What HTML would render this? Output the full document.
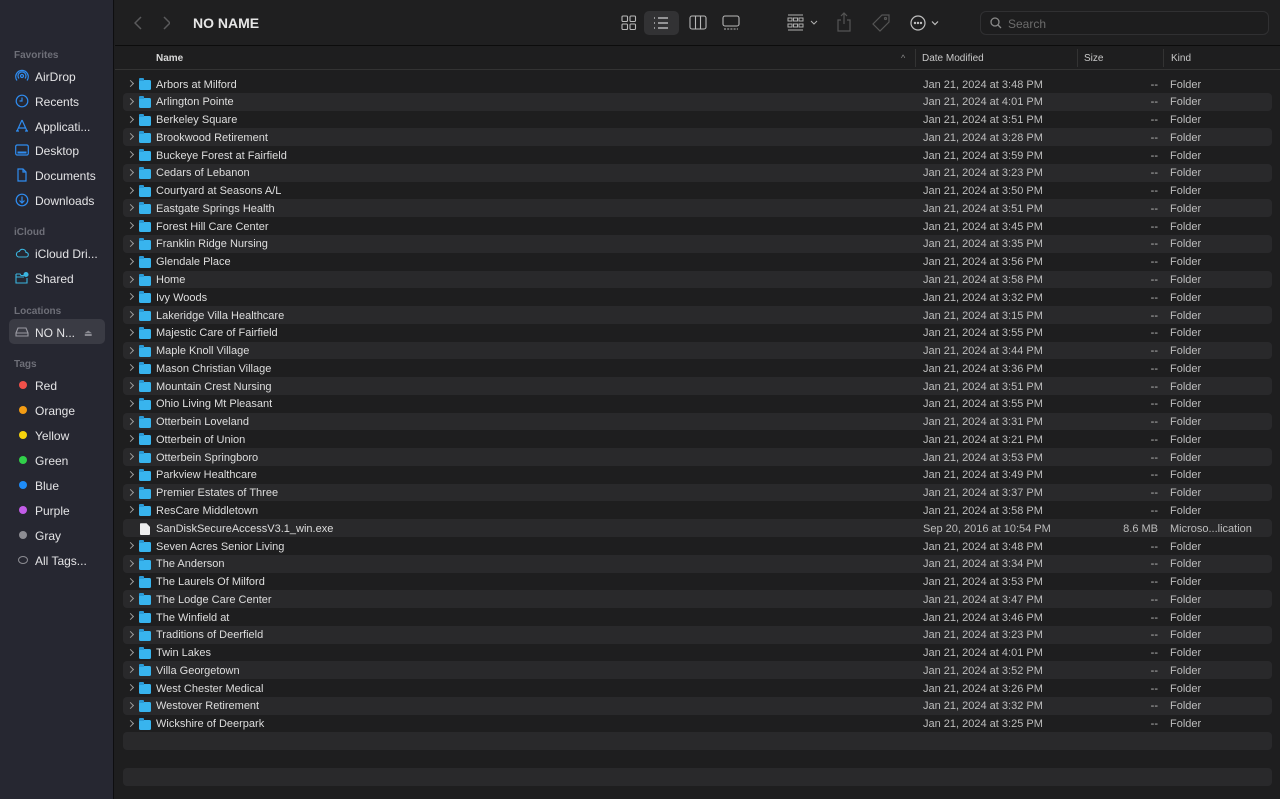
<!DOCTYPE html>
<html><head><meta charset="utf-8"><style>
*{margin:0;padding:0;box-sizing:border-box}
body{width:1280px;height:799px;overflow:hidden;background:#1e1e1f;font-family:"Liberation Sans",sans-serif;color:#dcdcdc;position:relative}
#side{position:absolute;left:0;top:0;width:114px;height:799px;background:#262731;border-right:1px solid #0e0e10}
.sh{position:absolute;left:14px;font-size:10px;color:#6e6f78;font-weight:bold}
.si{position:absolute;left:14px;font-size:12px;color:#e4e4e6;height:20px;line-height:20px;width:92px;white-space:nowrap}
.si .ic{position:absolute;left:1px;top:3px;width:14px;height:14px}
.si span.t{position:absolute;left:21px;top:1px}
.dot{position:absolute;left:5px;top:6px;width:8px;height:8px;border-radius:50%}
#tb{position:absolute;left:115px;top:0;right:0;height:46px;border-bottom:1px solid #0c0c0c;background:#1f1f20}
#hdr{position:absolute;left:115px;top:47px;right:0;height:23px;border-bottom:1px solid #333;font-size:10px;color:#c8c8c8}
#rows{position:absolute;left:123px;top:75.1px;width:1149px}
.r{height:17.78px;position:relative;font-size:11px;line-height:17.78px;color:#dedede;white-space:nowrap}
.r:nth-child(even){background:#29292b;border-radius:4px}
.r span{top:1.5px}
.r .ch{position:absolute;left:5px;top:6px;width:5px;height:5px;border-right:1.3px solid #9a9a9a;border-top:1.3px solid #9a9a9a;transform:rotate(45deg)}
.r .f{position:absolute;left:16px;top:5px;width:12px;height:10px;background:#38b4ee;border-radius:1.5px}
.r .f:before{content:"";position:absolute;left:0;top:-2px;width:5px;height:3px;background:#2a9ad6;border-radius:1px 1px 0 0}
.r .n{position:absolute;left:33px}
.r .d{position:absolute;left:800px;color:#bdbdbd}
.r .s{position:absolute;right:114px;color:#bdbdbd}
.r .k{position:absolute;left:1047px;color:#bdbdbd}
</style></head><body>
<div id="side">
<div class="sh" style="top:50px">Favorites</div>
<div class="si" style="top:66px"><svg class="ic" viewBox="0 0 14 14" fill="none" stroke="#2f8cf0" stroke-width="1.2"><circle cx="7" cy="7" r="1.5"/><path d="M4 9.5A4 4 0 1 1 10 9.5M2 11.5A6.3 6.3 0 1 1 12 11.5"/></svg><span class="t">AirDrop</span></div>
<div class="si" style="top:91px"><svg class="ic" viewBox="0 0 14 14" fill="none" stroke="#2f8cf0" stroke-width="1.2"><circle cx="7" cy="7" r="5.8"/><path d="M7 3.5V7H4.5"/></svg><span class="t">Recents</span></div>
<div class="si" style="top:116px"><svg class="ic" viewBox="0 0 14 14" fill="none" stroke="#2f8cf0" stroke-width="1.2"><path d="M7 1L2 12M7 1L12 12M3.5 9H10.5M1 12H4M10 12H13"/></svg><span class="t">Applicati...</span></div>
<div class="si" style="top:140px"><svg class="ic" viewBox="0 0 14 14" fill="none" stroke="#2f8cf0" stroke-width="1.2"><rect x="0.7" y="2" width="12.6" height="10" rx="1.5"/><path d="M2.5 9.5H11.5" stroke-width="2"/></svg><span class="t">Desktop</span></div>
<div class="si" style="top:165px"><svg class="ic" viewBox="0 0 14 14" fill="none" stroke="#2f8cf0" stroke-width="1.2"><path d="M3 1H8L11 4V13H3Z M8 1V4H11"/></svg><span class="t">Documents</span></div>
<div class="si" style="top:190px"><svg class="ic" viewBox="0 0 14 14" fill="none" stroke="#2f8cf0" stroke-width="1.2"><circle cx="7" cy="7" r="5.8"/><path d="M7 3.5V10M4.5 7.5L7 10L9.5 7.5"/></svg><span class="t">Downloads</span></div>
<div class="sh" style="top:227px">iCloud</div>
<div class="si" style="top:243px"><svg class="ic" viewBox="0 0 14 14" fill="none" stroke="#3ab5e0" stroke-width="1.1"><path d="M3.5 11H11a2.3 2.3 0 0 0 0-4.6A3.5 3.5 0 0 0 4.3 5.5 2.8 2.8 0 0 0 3.5 11Z"/></svg><span class="t">iCloud Dri...</span></div>
<div class="si" style="top:268px"><svg class="ic" viewBox="0 0 14 14" fill="none" stroke="#3ab5e0" stroke-width="1.1"><path d="M1 3H5L6 4.5H9M1 3V12H12V7M1 6H9"/><circle cx="11" cy="3.5" r="2" fill="#3ab5e0"/></svg><span class="t">Shared</span></div>
<div class="sh" style="top:306px">Locations</div>
<div style="position:absolute;left:9px;top:319px;width:96px;height:25px;background:#3a3b44;border-radius:5px"></div>
<div class="si" style="top:322px"><svg class="ic" viewBox="0 0 14 14" fill="none" stroke="#9a9aa2" stroke-width="1.1"><path d="M1 8L3 3H11L13 8V11H1Z M1 8H13"/></svg><span class="t">NO N...</span><span style="position:absolute;left:70px;top:1px;color:#8a8a92;font-size:9px">⏏</span></div>
<div class="sh" style="top:359px">Tags</div>
<div class="si" style="top:375px"><span class="dot" style="background:#f0504a"></span><span class="t">Red</span></div>
<div class="si" style="top:400px"><span class="dot" style="background:#f39c14"></span><span class="t">Orange</span></div>
<div class="si" style="top:425px"><span class="dot" style="background:#f6d30c"></span><span class="t">Yellow</span></div>
<div class="si" style="top:450px"><span class="dot" style="background:#31d04a"></span><span class="t">Green</span></div>
<div class="si" style="top:475px"><span class="dot" style="background:#1e8cf8"></span><span class="t">Blue</span></div>
<div class="si" style="top:500px"><span class="dot" style="background:#c25ce8"></span><span class="t">Purple</span></div>
<div class="si" style="top:525px"><span class="dot" style="background:#8d8d93"></span><span class="t">Gray</span></div>
<div class="si" style="top:550px"><span class="dot" style="background:none;border:1px solid #8d8d93;width:10px;left:4px"></span><span class="t">All Tags...</span></div>
</div>
<div id="tb">
<svg style="position:absolute;left:19px;top:15px" width="36" height="16" viewBox="0 0 36 16" fill="none" stroke="#5a5a5c" stroke-width="1.5"><path d="M8 2L2 8L8 14M31 2L37 8L31 14" transform="translate(-1 0)"/></svg>
<div style="position:absolute;left:78px;top:15px;font-size:14px;font-weight:bold;color:#e6e6e6">NO NAME</div>
<svg style="position:absolute;left:506px;top:15px" width="16" height="16" viewBox="0 0 16 16" fill="none" stroke="#b8b8b8" stroke-width="1.1"><rect x="1" y="1" width="5.5" height="5.5" rx="1"/><rect x="9" y="1" width="5.5" height="5.5" rx="1"/><rect x="1" y="9" width="5.5" height="5.5" rx="1"/><rect x="9" y="9" width="5.5" height="5.5" rx="1"/></svg>
<div style="position:absolute;left:529px;top:11px;width:35px;height:24px;background:#323234;border-radius:5px"></div>
<svg style="position:absolute;left:538px;top:16px" width="16" height="14" viewBox="0 0 16 14" fill="none" stroke="#d0d0d0" stroke-width="1.2"><path d="M1 2H2M1 7H2M1 12H2M5 2H15M5 7H15M5 12H15"/></svg>
<svg style="position:absolute;left:574px;top:15px" width="18" height="16" viewBox="0 0 18 16" fill="none" stroke="#b8b8b8" stroke-width="1.1"><rect x="1" y="1" width="16" height="13" rx="2"/><path d="M6.5 1V14M11.5 1V14"/></svg>
<svg style="position:absolute;left:607px;top:15px" width="18" height="16" viewBox="0 0 18 16" fill="none" stroke="#b8b8b8" stroke-width="1.1"><rect x="1" y="1" width="16" height="10" rx="2"/><path d="M2 14H16" stroke-dasharray="2 1.2"/></svg>
<svg style="position:absolute;left:672px;top:14px" width="36" height="18" viewBox="0 0 36 18" fill="none" stroke="#b0b0b0" stroke-width="1"><path d="M1 1H16"/><rect x="1" y="4" width="4" height="3"/><rect x="6.5" y="4" width="4" height="3"/><rect x="12" y="4" width="4" height="3"/><rect x="1" y="10" width="4" height="3"/><rect x="6.5" y="10" width="4" height="3"/><rect x="12" y="10" width="4" height="3"/><path d="M1 16H16M24 7L27 10L30 7" /></svg>
<svg style="position:absolute;left:722px;top:12px" width="14" height="20" viewBox="0 0 14 20" fill="none" stroke="#555" stroke-width="1.2"><path d="M7 1V12M4 4L7 1L10 4M4 8H1V19H13V8H10"/></svg>
<svg style="position:absolute;left:756px;top:13px" width="20" height="20" viewBox="0 0 20 20" fill="none" stroke="#555" stroke-width="1.2"><path d="M11 2H18V9L9 18L2 11Z"/><circle cx="14.5" cy="5.5" r="1"/></svg>
<svg style="position:absolute;left:795px;top:14px" width="32" height="18" viewBox="0 0 32 18" fill="none" stroke="#c0c0c0" stroke-width="1.2"><circle cx="8" cy="9" r="7"/><circle cx="5" cy="9" r=".6" fill="#c0c0c0"/><circle cx="8" cy="9" r=".6" fill="#c0c0c0"/><circle cx="11" cy="9" r=".6" fill="#c0c0c0"/><path d="M22 7.5L25 10.5L28 7.5"/></svg>
<div style="position:absolute;left:865px;top:11px;width:289px;height:24px;border:1px solid #303032;border-radius:6px;background:#1d1d1e"></div>
<svg style="position:absolute;left:875px;top:17px" width="12" height="12" viewBox="0 0 12 12" fill="none" stroke="#8a8a8a" stroke-width="1.3"><circle cx="5" cy="5" r="4"/><path d="M8 8L11 11"/></svg>
<div style="position:absolute;left:893px;top:17px;font-size:12px;color:#6c6c6c">Search</div>
</div>
<div id="hdr">
<div style="position:absolute;left:41px;top:6px;font-weight:bold;color:#d8d8d8">Name</div>
<div style="position:absolute;left:786px;top:6px;color:#888;font-size:9px">^</div>
<div style="position:absolute;left:800px;top:2px;width:1px;height:18px;background:#333"></div>
<div style="position:absolute;left:807px;top:6px">Date Modified</div>
<div style="position:absolute;left:962px;top:2px;width:1px;height:18px;background:#333"></div>
<div style="position:absolute;left:969px;top:6px">Size</div>
<div style="position:absolute;left:1048px;top:2px;width:1px;height:18px;background:#333"></div>
<div style="position:absolute;left:1056px;top:6px">Kind</div>
</div>
<div id="rows">
<div class="r"><i class="ch"></i><i class="f"></i><span class="n">Arbors at Milford</span><span class="d">Jan 21, 2024 at 3:48 PM</span><span class="s">--</span><span class="k">Folder</span></div>
<div class="r"><i class="ch"></i><i class="f"></i><span class="n">Arlington Pointe</span><span class="d">Jan 21, 2024 at 4:01 PM</span><span class="s">--</span><span class="k">Folder</span></div>
<div class="r"><i class="ch"></i><i class="f"></i><span class="n">Berkeley Square</span><span class="d">Jan 21, 2024 at 3:51 PM</span><span class="s">--</span><span class="k">Folder</span></div>
<div class="r"><i class="ch"></i><i class="f"></i><span class="n">Brookwood Retirement</span><span class="d">Jan 21, 2024 at 3:28 PM</span><span class="s">--</span><span class="k">Folder</span></div>
<div class="r"><i class="ch"></i><i class="f"></i><span class="n">Buckeye Forest at Fairfield</span><span class="d">Jan 21, 2024 at 3:59 PM</span><span class="s">--</span><span class="k">Folder</span></div>
<div class="r"><i class="ch"></i><i class="f"></i><span class="n">Cedars of Lebanon</span><span class="d">Jan 21, 2024 at 3:23 PM</span><span class="s">--</span><span class="k">Folder</span></div>
<div class="r"><i class="ch"></i><i class="f"></i><span class="n">Courtyard at Seasons A/L</span><span class="d">Jan 21, 2024 at 3:50 PM</span><span class="s">--</span><span class="k">Folder</span></div>
<div class="r"><i class="ch"></i><i class="f"></i><span class="n">Eastgate Springs Health</span><span class="d">Jan 21, 2024 at 3:51 PM</span><span class="s">--</span><span class="k">Folder</span></div>
<div class="r"><i class="ch"></i><i class="f"></i><span class="n">Forest Hill Care Center</span><span class="d">Jan 21, 2024 at 3:45 PM</span><span class="s">--</span><span class="k">Folder</span></div>
<div class="r"><i class="ch"></i><i class="f"></i><span class="n">Franklin Ridge Nursing</span><span class="d">Jan 21, 2024 at 3:35 PM</span><span class="s">--</span><span class="k">Folder</span></div>
<div class="r"><i class="ch"></i><i class="f"></i><span class="n">Glendale Place</span><span class="d">Jan 21, 2024 at 3:56 PM</span><span class="s">--</span><span class="k">Folder</span></div>
<div class="r"><i class="ch"></i><i class="f"></i><span class="n">Home</span><span class="d">Jan 21, 2024 at 3:58 PM</span><span class="s">--</span><span class="k">Folder</span></div>
<div class="r"><i class="ch"></i><i class="f"></i><span class="n">Ivy Woods</span><span class="d">Jan 21, 2024 at 3:32 PM</span><span class="s">--</span><span class="k">Folder</span></div>
<div class="r"><i class="ch"></i><i class="f"></i><span class="n">Lakeridge Villa Healthcare</span><span class="d">Jan 21, 2024 at 3:15 PM</span><span class="s">--</span><span class="k">Folder</span></div>
<div class="r"><i class="ch"></i><i class="f"></i><span class="n">Majestic Care of Fairfield</span><span class="d">Jan 21, 2024 at 3:55 PM</span><span class="s">--</span><span class="k">Folder</span></div>
<div class="r"><i class="ch"></i><i class="f"></i><span class="n">Maple Knoll Village</span><span class="d">Jan 21, 2024 at 3:44 PM</span><span class="s">--</span><span class="k">Folder</span></div>
<div class="r"><i class="ch"></i><i class="f"></i><span class="n">Mason Christian Village</span><span class="d">Jan 21, 2024 at 3:36 PM</span><span class="s">--</span><span class="k">Folder</span></div>
<div class="r"><i class="ch"></i><i class="f"></i><span class="n">Mountain Crest Nursing</span><span class="d">Jan 21, 2024 at 3:51 PM</span><span class="s">--</span><span class="k">Folder</span></div>
<div class="r"><i class="ch"></i><i class="f"></i><span class="n">Ohio Living Mt Pleasant</span><span class="d">Jan 21, 2024 at 3:55 PM</span><span class="s">--</span><span class="k">Folder</span></div>
<div class="r"><i class="ch"></i><i class="f"></i><span class="n">Otterbein Loveland</span><span class="d">Jan 21, 2024 at 3:31 PM</span><span class="s">--</span><span class="k">Folder</span></div>
<div class="r"><i class="ch"></i><i class="f"></i><span class="n">Otterbein of Union</span><span class="d">Jan 21, 2024 at 3:21 PM</span><span class="s">--</span><span class="k">Folder</span></div>
<div class="r"><i class="ch"></i><i class="f"></i><span class="n">Otterbein Springboro</span><span class="d">Jan 21, 2024 at 3:53 PM</span><span class="s">--</span><span class="k">Folder</span></div>
<div class="r"><i class="ch"></i><i class="f"></i><span class="n">Parkview Healthcare</span><span class="d">Jan 21, 2024 at 3:49 PM</span><span class="s">--</span><span class="k">Folder</span></div>
<div class="r"><i class="ch"></i><i class="f"></i><span class="n">Premier Estates of Three</span><span class="d">Jan 21, 2024 at 3:37 PM</span><span class="s">--</span><span class="k">Folder</span></div>
<div class="r"><i class="ch"></i><i class="f"></i><span class="n">ResCare Middletown</span><span class="d">Jan 21, 2024 at 3:58 PM</span><span class="s">--</span><span class="k">Folder</span></div>
<div class="r"><i style="position:absolute;left:17px;top:4px;width:10px;height:12px;background:#eee;border-radius:1px;clip-path:polygon(0 0,65% 0,100% 30%,100% 100%,0 100%)"></i><span class="n">SanDiskSecureAccessV3.1_win.exe</span><span class="d">Sep 20, 2016 at 10:54 PM</span><span class="s">8.6 MB</span><span class="k">Microso...lication</span></div>
<div class="r"><i class="ch"></i><i class="f"></i><span class="n">Seven Acres Senior Living</span><span class="d">Jan 21, 2024 at 3:48 PM</span><span class="s">--</span><span class="k">Folder</span></div>
<div class="r"><i class="ch"></i><i class="f"></i><span class="n">The Anderson</span><span class="d">Jan 21, 2024 at 3:34 PM</span><span class="s">--</span><span class="k">Folder</span></div>
<div class="r"><i class="ch"></i><i class="f"></i><span class="n">The Laurels Of Milford</span><span class="d">Jan 21, 2024 at 3:53 PM</span><span class="s">--</span><span class="k">Folder</span></div>
<div class="r"><i class="ch"></i><i class="f"></i><span class="n">The Lodge Care Center</span><span class="d">Jan 21, 2024 at 3:47 PM</span><span class="s">--</span><span class="k">Folder</span></div>
<div class="r"><i class="ch"></i><i class="f"></i><span class="n">The Winfield at</span><span class="d">Jan 21, 2024 at 3:46 PM</span><span class="s">--</span><span class="k">Folder</span></div>
<div class="r"><i class="ch"></i><i class="f"></i><span class="n">Traditions of Deerfield</span><span class="d">Jan 21, 2024 at 3:23 PM</span><span class="s">--</span><span class="k">Folder</span></div>
<div class="r"><i class="ch"></i><i class="f"></i><span class="n">Twin Lakes</span><span class="d">Jan 21, 2024 at 4:01 PM</span><span class="s">--</span><span class="k">Folder</span></div>
<div class="r"><i class="ch"></i><i class="f"></i><span class="n">Villa Georgetown</span><span class="d">Jan 21, 2024 at 3:52 PM</span><span class="s">--</span><span class="k">Folder</span></div>
<div class="r"><i class="ch"></i><i class="f"></i><span class="n">West Chester Medical</span><span class="d">Jan 21, 2024 at 3:26 PM</span><span class="s">--</span><span class="k">Folder</span></div>
<div class="r"><i class="ch"></i><i class="f"></i><span class="n">Westover Retirement</span><span class="d">Jan 21, 2024 at 3:32 PM</span><span class="s">--</span><span class="k">Folder</span></div>
<div class="r"><i class="ch"></i><i class="f"></i><span class="n">Wickshire of Deerpark</span><span class="d">Jan 21, 2024 at 3:25 PM</span><span class="s">--</span><span class="k">Folder</span></div>
<div class="r"></div>
<div class="r"></div>
<div class="r"></div>
</div>
</body></html>
